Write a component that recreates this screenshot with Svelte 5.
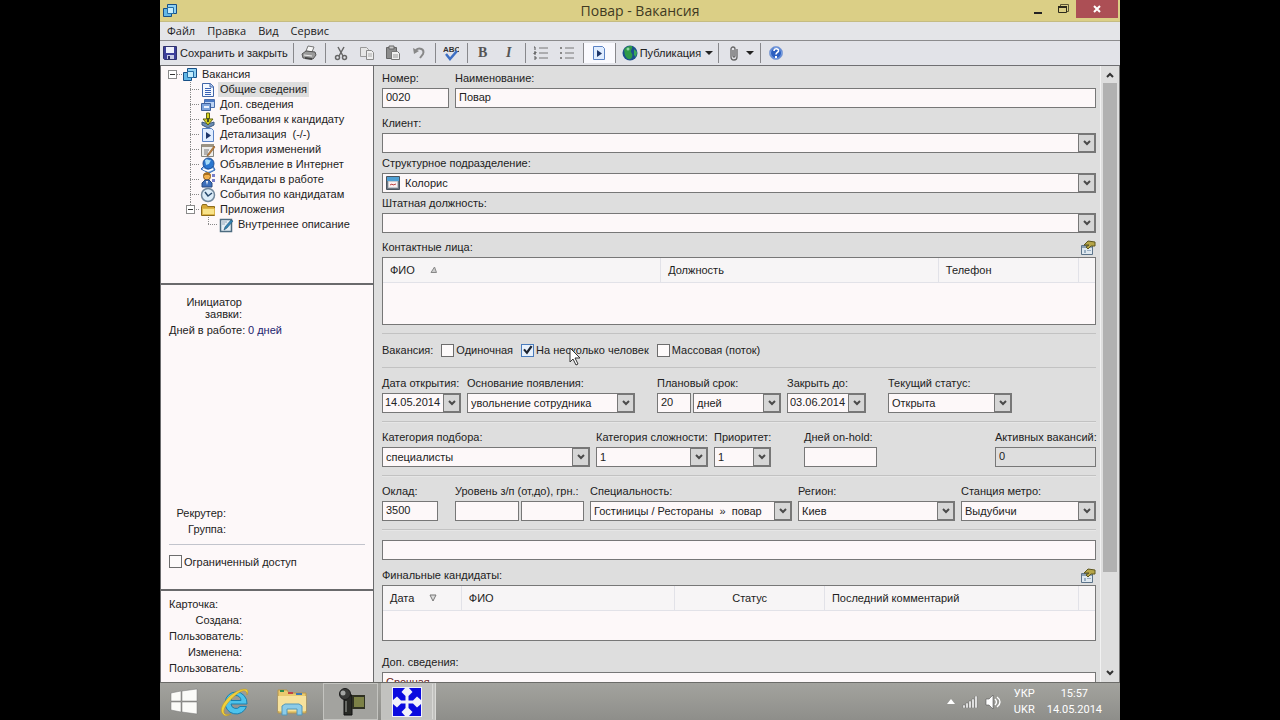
<script>
  let tree = [
    { icon: 'page', text: 'Общие сведения', active: true },
    { icon: 'cards', text: 'Доп. сведения' },
    { icon: 'needs', text: 'Требования к кандидату' },
    { icon: 'play', text: 'Детализация  (-/-)' },
    { icon: 'history', text: 'История изменений' },
    { icon: 'web', text: 'Объявление в Интернет' },
    { icon: 'person', text: 'Кандидаты в работе' },
    { icon: 'clock', text: 'События по кандидатам' }
  ];
  let cardRows = ['Создана:', 'Пользователь:', 'Изменена:', 'Пользователь:'];
</script>

{#snippet icon(name)}
  <svg class="icon" viewBox="0 0 16 16" width="16" height="16" aria-hidden="true">
    {#if name === 'app'}
      <path d="M5.500 1.500h9v9h-9z" fill="#8fd0f2" stroke="#174f86" />
      <path d="M1.500 5.500h8v8h-8z" fill="#62b7e6" stroke="#174f86" />
      <path d="M5.500 4.500h6v6h-6z" fill="#c4ecfb" stroke="#256fa8" />
    {:else if name === 'save'}
      <path d="M1.500 1.500h13v13h-12l-1-1z" fill="#3c3f9a" stroke="#30336e" />
      <path d="M4 2h8v6H4z" fill="#eef1fb" />
      <path d="M5 10h7v4H5z" fill="#c7cbe4" /><path d="M6 11h2v3H6z" fill="#2b2d66" />
    {:else if name === 'print'}
      <path d="M5 6l2-5 6 1-2 5z" fill="#f8f8f8" stroke="#777" />
      <path d="M1 9l4-3 9 1 1 3-3 4-10-1z" fill="#9a9a9a" stroke="#555" />
      <path d="M3 10l8 1" stroke="#eee" /><path d="M4 13l7 1" stroke="#444" stroke-width="2" />
    {:else if name === 'cut'}
      <path d="M5 2l5 9M11 2L6 11" fill="none" stroke="#666" stroke-width="1.500" />
      <circle cx="4.500" cy="12.500" r="2" fill="none" stroke="#666" stroke-width="1.500" />
      <circle cx="11.500" cy="12.500" r="2" fill="none" stroke="#666" stroke-width="1.500" />
    {:else if name === 'copy'}
      <path d="M1.500 2.500h6l2 2v7h-8z" fill="#e6e6e6" stroke="#999" />
      <path d="M7.500 5.500h5l2 2v7h-7z" fill="#eee" stroke="#8a8a8a" /><path d="M9 9h4M9 11h4" stroke="#aaa" />
    {:else if name === 'paste'}
      <path d="M1.500 2.500h10v11h-10z" fill="#8c8c8c" stroke="#666" />
      <path d="M4 1h5v3H4z" fill="#c9c9c9" stroke="#666" />
      <path d="M6.500 6.500h6l2 2v6h-8z" fill="#f0f0f0" stroke="#777" /><path d="M8 10h5M8 12h5" stroke="#999" />
    {:else if name === 'undo'}
      <path d="M5 5c3-3 9-1 7 4l-3 4" fill="none" stroke="#888" stroke-width="2" />
      <path d="M2 3l1 6 5-3z" fill="#888" />
    {:else if name === 'spell'}
      <text x="0" y="7" font-size="8" font-weight="700" font-family="Liberation Sans" fill="#333">ABC</text>
      <path d="M3 9l4 5 7-8" fill="none" stroke="#3d6fc4" stroke-width="2.500" />
    {:else if name === 'numbers'}
      <path d="M6 3h9M6 8h9M6 13h9" stroke="#777" /><path d="M1 2h1v3M1 7h2v1H1v1h2M1 12h2v2H1" fill="none" stroke="#555" />
    {:else if name === 'bullets'}
      <path d="M6 3h9M6 8h9M6 13h9" stroke="#777" /><path d="M1 2h2v2H1zM1 7h2v2H1zM1 12h2v2H1z" fill="#888" />
    {:else if name === 'globe'}
      <circle cx="8" cy="8" r="7.500" fill="#1b4f8e" />
      <path d="M2 5c2-4 6-4 8-4 1 3-2 4-1 6s2 2 1 5-4 3-6 0-1-4-2-7z" fill="#2f9a48" />
      <path d="M12 4l3 3-1 5-2-2z" fill="#3aa85a" /><circle cx="6" cy="4" r="1.500" fill="#8ed7a4" />
    {:else if name === 'clip'}
      <path d="M11 4v8a3 3 0 0 1-6 0V4a2 2 0 0 1 4 0v7a1 1 0 0 1-2 0V5" fill="none" stroke="#666" stroke-width="1.300" />
    {:else if name === 'help'}
      <circle cx="8" cy="8" r="6.500" fill="#2c5fc0" stroke="#8aa5d8" />
      <circle cx="8" cy="8" r="5.500" fill="none" stroke="#7fa4e6" />
      <path d="M6 6c0-3 5-3 4.500 0C10 7.500 8 7.500 8 9.500" fill="none" stroke="#fff" stroke-width="1.600" /><path d="M7 11h2v2H7z" fill="#fff" />
    {:else if name === 'page'}
      <path d="M2.500 1.500h8l3 3v10h-11z" fill="#f4f8ff" stroke="#4166a8" />
      <path d="M10 1.500V5h3.500" fill="#b9cdf0" stroke="#4166a8" /><path d="M5 6.500h6M5 8.500h6M5 10.500h6M5 12.500h6" stroke="#3a62b4" />
    {:else if name === 'cards'}
      <path d="M4.500 2.500h10v8h-10z" fill="#bed4f4" stroke="#4a6fae" /><path d="M5 3h9v2H5z" fill="#4b79c4" />
      <path d="M1.500 6.500h9v7h-9z" fill="#7ea4dc" stroke="#3e609c" /><path d="M4 9h5v2H4z" fill="#eaf2ff" />
    {:else if name === 'needs'}
      <path d="M2 10l6 2 6-2v3l-6 3-6-3z" fill="#6d8db4" stroke="#3b5a80" />
      <path d="M6.500 1h3v6h3.500l-5 6-5-6h3.500z" fill="#d8d322" stroke="#5f6413" /><path d="M7 6h2v4H7z" fill="#4a5020" />
    {:else if name === 'play'}
      <path d="M2.500 1.500h9l2 2v11h-11z" fill="#e0edff" stroke="#5a82c4" /><path d="M6 5l5 3.500L6 12z" fill="#1d3569" />
    {:else if name === 'history'}
      <path d="M1.500 2.500h12v12h-12z" fill="#ededeb" stroke="#85857f" /><path d="M2 2h12v3H2z" fill="#9b9383" />
      <path d="M4 8h5M4 10h4M4 12h4" stroke="#777" /><path d="M14 4l-6 8-1 2 2-1 6-8z" fill="#c9873e" stroke="#7d4d20" stroke-width=".6" />
    {:else if name === 'web'}
      <path d="M1 12l3-3h9l2 4-6 3z" fill="#7fb0ea" stroke="#2f64ad" />
      <circle cx="8.500" cy="6.500" r="5.500" fill="#2a76cf" stroke="#1d4d94" />
      <path d="M5 3c3-2 3 1 6 0l-2 4-3 1z" fill="#a7dcf7" /><path d="M3 12l5 2 5-2" fill="none" stroke="#fff" stroke-width="1.500" />
    {:else if name === 'person'}
      <circle cx="7" cy="4.500" r="3.500" fill="#f2b04b" stroke="#8a5a1c" /><path d="M3 4c0-5 8-5 8 0L9 3H5z" fill="#a8701f" />
      <path d="M2 15v-4l3-3h4l3 3v4z" fill="#3d6fba" stroke="#28497e" /><path d="M6 9l1 4 1-4z" fill="#fff" />
      <path d="M12 2h3v3h-3zM12 7h3v3h-3z" fill="#777ec9" />
    {:else if name === 'clock'}
      <circle cx="8" cy="8" r="6.500" fill="#dcecf8" stroke="#71879b" stroke-width="1.500" />
      <path d="M5 5l3 4 4-3" fill="none" stroke="#28496c" stroke-width="1.500" />
    {:else if name === 'folder'}
      <path d="M1.500 4.500l1-2h4l1 2h7v9h-13z" fill="#d6a735" stroke="#8b6a1b" /><path d="M2.500 6.500h12v6h-12z" fill="#f8e38a" stroke="#dcb548" />
    {:else if name === 'note'}
      <path d="M2.500 2.500h11v12h-11z" fill="#e4eef4" stroke="#4d6b80" stroke-width="1.500" />
      <path d="M4 5h5M4 7h3" stroke="#9ab" /><path d="M13 3l-6 7-1 3 3-2 6-7z" fill="#3285b5" stroke="#204f70" stroke-width=".6" />
    {:else if name === 'unit'}
      <path d="M1.500 1.500h13v13h-13z" fill="#6f7883" stroke="#4a5560" /><path d="M2 2h12v4H2z" fill="#4fa0d4" />
      <path d="M3.500 6.500h9v6h-9z" fill="#fbeeee" stroke="#c5cbd1" /><path d="M5 10l2-1 1 1 3-1" fill="none" stroke="#b44" />
    {:else if name === 'props'}
      <path d="M1.500 5.500h11v9h-11z" fill="#dfe8ef" stroke="#5b7389" /><path d="M2 6h10v2H2z" fill="#8ba0b2" />
      <path d="M4 5l4-4 7 1v4h-4l-3 3-2-2 3-2z" fill="#b6a548" stroke="#5e571f" /><path d="M4 10h2v3H4zM7 10h4v1H7z" fill="#9ab0c4" />
    {/if}
  </svg>
{/snippet}

{#snippet chevron()}
  <span class="drop" aria-hidden="true"><svg viewBox="0 0 8 6" width="8" height="6"><path d="M1 1l3 3 3-3" fill="none" stroke="#4a4a4a" stroke-width="2" /></svg></span>
{/snippet}

{#snippet text(id, label, value)}
  <div class="field">
    <label for={id}>{label}</label>
    <input {id} type="text" {value} />
  </div>
{/snippet}

{#snippet combo(id, label, value, kind = '')}
  <div class="field">
    <label for={id}>{label}</label>
    <div class="combo {kind}">
      <select {id}><option>{value}</option></select>
      {@render chevron()}
      {#if kind === 'pictured'}<span class="pic">{@render icon('unit')}</span>{/if}
    </div>
  </div>
{/snippet}

{#snippet check(label, checked = false, pointer = false)}
  <label class="check">
    <input type="checkbox" {checked} />
    <span>{label}</span>
    {#if pointer}
      <svg class="pointer" viewBox="0 0 12 19" width="12" height="19" aria-hidden="true"><path d="M1 1v14l3-3 3 6 2-1-3-6h5z" fill="#fff" stroke="#333" /></svg>
    {/if}
  </label>
{/snippet}

{#snippet tool(name, label)}
  <button class="tool" aria-label={label}>{@render icon(name)}</button>
{/snippet}

<div class="screen">
  <header class="title">
    {@render icon('app')}
    <h1>Повар - Вакансия</h1>
    <div class="controls">
      <button aria-label="Свернуть"><svg viewBox="0 0 12 12" width="12" height="12"><path d="M2 9h8v2H2z" fill="#222" /></svg></button>
      <button aria-label="Восстановить"><svg viewBox="0 0 12 12" width="12" height="12"><path d="M3.500 3V1.500h8v7H10" fill="none" stroke="#5d5635" /><path d="M1.500 3.500h8v6h-8z" fill="none" stroke="#2d2a1c" /><path d="M1 3h9v2H1z" fill="#2d2a1c" /></svg></button>
      <button class="close" aria-label="Закрыть"><svg viewBox="0 0 10 10" width="10" height="10"><path d="M2 2l6 6M8 2L2 8" stroke="#fff" stroke-width="2" /></svg></button>
    </div>
  </header>

  <nav class="menu">
    <button>Файл</button><button>Правка</button><button>Вид</button><button>Сервис</button>
  </nav>

  <div class="toolbar" role="toolbar">
    <div class="group"><button class="save">{@render icon('save')}Сохранить и закрыть</button></div>
    <div class="group">{@render tool('print', 'Печать')}</div>
    <div class="group">
      {@render tool('cut', 'Вырезать')}{@render tool('copy', 'Копировать')}{@render tool('paste', 'Вставить')}{@render tool('undo', 'Отменить')}
    </div>
    <div class="group">{@render tool('spell', 'Орфография')}</div>
    <div class="group"><button class="tool letter"><b>B</b></button><button class="tool letter"><b><i>I</i></b></button></div>
    <div class="group">{@render tool('numbers', 'Нумерация')}{@render tool('bullets', 'Маркеры')}</div>
    <div class="group lit">{@render tool('play', 'Просмотр')}</div>
    <div class="group"><button class="publish">{@render icon('globe')}Публикация<span class="caret"></span></button></div>
    <div class="group"><button class="attach" aria-label="Вложение">{@render icon('clip')}<span class="caret"></span></button></div>
    <div class="group">{@render tool('help', 'Справка')}</div>
  </div>

  <div class="work">
    <aside>
      <section class="tree">
        <div class="root"><button class="expander" aria-label="Свернуть Вакансия"></button><span class="dash"></span>{@render icon('app')}<span>Вакансия</span></div>
        <ul>
          {#each tree as item}
            <li><div class="node">{@render icon(item.icon)}<a href="#main" class:active={item.active}>{item.text}</a></div></li>
          {/each}
          <li>
            <div class="node last">{@render icon('folder')}<a href="#main">Приложения</a><button class="expander" aria-label="Свернуть Приложения"></button></div>
            <ul><li><div class="node last">{@render icon('note')}<a href="#main">Внутреннее описание</a></div></li></ul>
          </li>
        </ul>
      </section>
      <section class="info">
        <dl>
          <div class="two"><dt>Инициатор заявки:</dt><dd></dd></div>
          <div><dt>Дней в работе:</dt><dd>0 дней</dd></div>
        </dl>
        <dl class="lower">
          <div><dt>Рекрутер:</dt><dd></dd></div>
          <div><dt>Группа:</dt><dd></dd></div>
        </dl>
        <div class="access">{@render check('Ограниченный доступ')}</div>
      </section>
      <section class="card">
        <h2>Карточка:</h2>
        <dl>{#each cardRows as row}<div><dt>{row}</dt><dd></dd></div>{/each}</dl>
      </section>
    </aside>

    <main id="main">
      <form>
        <div class="row head">{@render text('number', 'Номер:', '0020')}{@render text('name', 'Наименование:', 'Повар')}</div>
        <div class="stack">
          {@render combo('client', 'Клиент:', '')}
          {@render combo('unit', 'Структурное подразделение:', 'Колорис', 'pictured')}
          {@render combo('post', 'Штатная должность:', '')}
        </div>
        <section class="list">
          <div class="caption"><h2>Контактные лица:</h2><button type="button" aria-label="Свойства контактов">{@render icon('props')}</button></div>
          <div class="frame contacts">
            <table>
              <colgroup><col class="c39" /><col class="c39" /><col /><col class="end" /></colgroup>
              <thead><tr><th>ФИО <svg class="sort" viewBox="0 0 8 8" width="8" height="8"><path d="M1 6.500L4.500 1 6.500 6.500z" fill="#ccc" stroke="#888" /></svg></th><th>Должность</th><th>Телефон</th><th></th></tr></thead>
            </table>
          </div>
        </section>
        <div class="kinds">
          <span>Вакансия:</span>
          {@render check('Одиночная')}
          {@render check('На несколько человек', true, true)}
          {@render check('Массовая (поток)')}
        </div>
        <div class="row dates">
          {@render combo('opened', 'Дата открытия:', '14.05.2014', 'date')}
          {@render combo('reason', 'Основание появления:', 'увольнение сотрудника')}
          <span></span>
          <div class="field">
            <label for="term">Плановый срок:</label>
            <div class="pair term">
              <input id="term" type="text" value="20" />
              <div class="combo"><select aria-label="Единица срока"><option>дней</option></select>{@render chevron()}</div>
            </div>
          </div>
          {@render combo('closing', 'Закрыть до:', '03.06.2014', 'date')}
          <span></span>
          {@render combo('status', 'Текущий статус:', 'Открыта')}
        </div>
        <div class="row groups">
          {@render combo('category', 'Категория подбора:', 'специалисты')}
          {@render combo('level', 'Категория сложности:', '1')}
          {@render combo('priority', 'Приоритет:', '1')}
          <span></span>
          {@render text('hold', 'Дней on-hold:', '')}
          <span></span>
          <div class="field"><label for="active">Активных вакансий:</label><input id="active" class="locked" type="text" value="0" readonly /></div>
        </div>
        <div class="row pay">
          {@render text('salary', 'Оклад:', '3500')}
          <span></span>
          <div class="field">
            <label for="from">Уровень з/п (от,до), грн.:</label>
            <div class="pair"><input id="from" type="text" /><input aria-label="Уровень до" type="text" /></div>
          </div>
          {@render combo('speciality', 'Специальность:', 'Гостиницы / Рестораны\u00a0 »\u00a0 повар')}
          {@render combo('region', 'Регион:', 'Киев')}
          {@render combo('metro', 'Станция метро:', 'Выдубичи')}
        </div>
        <div class="single"><input aria-label="Комментарий" type="text" /></div>
        <section class="list">
          <div class="caption"><h2>Финальные кандидаты:</h2><button type="button" aria-label="Свойства кандидатов">{@render icon('props')}</button></div>
          <div class="frame finals">
            <table>
              <colgroup><col class="c11" /><col class="c30" /><col class="c21" /><col /><col class="end" /></colgroup>
              <thead><tr><th>Дата <svg class="sort" viewBox="0 0 8 8" width="8" height="8"><path d="M1 1h6L4 7z" fill="#ddd" stroke="#777" /></svg></th><th>ФИО</th><th class="mid">Статус</th><th>Последний комментарий</th><th></th></tr></thead>
            </table>
          </div>
        </section>
        <div class="field extra">
          <label for="extra">Доп. сведения:</label>
          <textarea id="extra" rows="5">Срочная</textarea>
        </div>
      </form>
      <div class="scroll" aria-hidden="true">
        <svg viewBox="0 0 8 6" width="8" height="6"><path d="M1 5l3-3 3 3" fill="none" stroke="#333" stroke-width="2" /></svg>
        <div class="track"><div class="thumb"></div></div>
        <svg viewBox="0 0 8 6" width="8" height="6"><path d="M1 1l3 3 3-3" fill="none" stroke="#333" stroke-width="2" /></svg>
      </div>
    </main>
  </div>

  <footer>
    <button class="task" aria-label="Пуск">
      <svg viewBox="0 0 28 28" width="28" height="28"><path d="M1 5l10-2v10H1zM12 3l15-2v12H12zM1 14h10v10L1 22zM12 14h15v12l-15-2z" fill="#fbfbf8" stroke="#777" stroke-width=".5" /></svg>
    </button>
    <button class="task" aria-label="Internet Explorer">
      <svg viewBox="0 0 32 30" width="32" height="30">
        <path d="M16 5a11 11 0 1 0 10.500 14.500h-6.500a5 5 0 0 1-9-2.500H27A11 11 0 0 0 16 5zM11 13.500a5 5 0 0 1 10 0z" fill="#4dc3ec" stroke="#1a7fae" fill-rule="evenodd" />
        <path d="M27 8C31 0 22 1 14 6S-1 21 2 26s7 2 9 1c-4 1-8 1-7-4S12 11 17 7s10-5 10 1z" fill="#f1cf3c" stroke="#b5921e" stroke-width=".5" />
      </svg>
    </button>
    <button class="task" aria-label="Проводник">
      <svg viewBox="0 0 32 30" width="32" height="30">
        <path d="M2 3h9l2 3h17v20H2z" fill="#e9c96e" stroke="#b8964a" /><path d="M4 3h4v2H4z" fill="#2d8a48" /><path d="M12 5h5v2h-5z" fill="#c04444" /><path d="M20 6h6v2h-6z" fill="#3c78b8" />
        <path d="M2 9h28v15H2z" fill="#f6e19c" /><path d="M6 28V19l3-2h14l3 2v9h-5v-6H11v6z" fill="#8ccbe8" stroke="#5297ba" />
      </svg>
    </button>
    <button class="task open" aria-label="Камера">
      <svg viewBox="0 0 30 30" width="30" height="30">
        <path d="M8 8h8v20H8z" fill="#292a26" stroke="#111" /><path d="M16 8h13v14H16z" fill="#2f3122" /><path d="M18 10h10v10H18z" fill="#7c8146" />
        <circle cx="9" cy="7" r="5.500" fill="#3a3b39" stroke="#1b1b1b" /><circle cx="7" cy="6" r="2.500" fill="#a4a6a4" /><path d="M10 14v11" stroke="#686a65" stroke-width="2" />
      </svg>
    </button>
    <button class="task open current" aria-label="Вакансия">
      <svg viewBox="0 0 30 30" width="30" height="30">
        <path d="M0 0h30v30H0z" fill="#f1f1fb" />
        <path d="M1 1h12L9.500 5l4 4v4.500H9l-4-4L1 13z" fill="#0a0adf" />
        <path d="M29 1H17l3.500 4-4 4v4.500H21l4-4 4 3.500z" fill="#0a0adf" />
        <path d="M1 29h12l-3.500-4 4-4v-4.500H9l-4 4L1 17z" fill="#0a0adf" />
        <path d="M29 29H17l3.500-4-4-4v-4.500H21l4 4 4-3.500z" fill="#0a0adf" />
      </svg>
    </button>
    <div class="tray">
      <svg viewBox="0 0 8 5" width="8" height="5"><path d="M0 5l4-5 4 5z" fill="#fff" /></svg>
      <svg viewBox="0 0 16 12" width="16" height="12"><path d="M1 9h2v3H1zM4 7h2v5H4zM7 5h2v7H7zM10 3h2v9h-2zM13 0h2v12h-2z" fill="#fff" stroke="#555" stroke-width=".4" /></svg>
      <svg viewBox="0 0 16 14" width="16" height="14"><path d="M1 4h3l4-4v14l-4-4H1z" fill="#fff" stroke="#555" stroke-width=".6" /><path d="M10 4c2 2 2 4 0 6M12 2c4 3 4 7 0 10" fill="none" stroke="#fff" stroke-width="1.400" /></svg>
      <p class="lang">УКР<br />UKR</p>
      <p class="time">15:57<br />14.05.2014</p>
    </div>
  </footer>
</div>

<style>
  :global(body) { margin: 0; background: #000; }
  * { box-sizing: border-box; }
  .screen {
    display: flex; flex-direction: column; height: 100vh; margin: 0 12.5%; overflow: hidden;
    background: #dedede; color: #222; font: 11px/16px "Liberation Sans", Arial, sans-serif;
  }
  button { padding: 0; border: 0; background: none; color: inherit; font: inherit; }
  h1, h2, p, dl, dd, ul { margin: 0; padding: 0; font: inherit; list-style: none; }
  svg { display: block; flex: none; }

  .title { display: grid; grid-template-columns: 1fr auto 1fr; align-items: center; height: 22px; flex: none; padding: 0 2px; background: #dbcf86; border-bottom: 1px solid #c5bc82; }
  .title h1 { font: 14px/20px "Open Sans", sans-serif; color: #3f3a22; }
  .controls { display: flex; justify-content: flex-end; align-self: start; }
  .controls button { display: flex; align-items: center; justify-content: center; width: 25px; height: 18px; }
  .controls .close { width: 42px; margin-left: 1px; background: #ac4f55; }

  .menu { display: flex; gap: 12px; height: 19px; flex: none; padding-left: 7px; background: #e4e5e8; border-bottom: 1px solid #8b8b8d; font: 11px/18px "Open Sans", sans-serif; }
  .toolbar { display: flex; height: 25px; flex: none; padding: 2px 0; background: #e2e3e8; border-bottom: 1px solid #6f6f72; }
  .group { display: flex; align-items: center; padding: 0 3px 0 2px; border-right: 1px solid #88888c; }
  .group:last-child { border: 0; }
  .group.lit { background: #fafafe; }
  .tool { display: flex; justify-content: center; width: 26px; }
  .letter { color: #555; font: 14px/16px "Liberation Serif", serif; }
  .save, .publish, .attach { display: flex; align-items: center; gap: 2px; padding-right: 2px; }
  .publish { padding: 0 2px 0 4px; }
  .attach { padding: 0 3px 0 5px; }
  .caret { border: 4px solid transparent; border-top-color: #222; border-bottom: 0; margin-left: 2px; }

  .work { display: grid; grid-template-columns: 214fr 746fr; flex: 1; min-height: 0; }
  aside { display: grid; grid-template-rows: 219px 1fr 91px; min-height: 0; border: solid #6a6a6c; border-width: 0 1px; background: #fdf8f9; }
  aside section { border-bottom: 2px solid #6a6a6c; }
  aside section.card { border: 0; }
  .tree { padding: 1px 0 0 7px; line-height: 15px; }
  .root, .node { display: flex; align-items: center; height: 15px; position: relative; }
  .root > span:last-child { padding-left: 4px; }
  .dash { width: 5px; border-top: 1px dotted #888; }
  .expander { width: 9px; height: 9px; border: 1px solid #8a8a8a; background: linear-gradient(#333, #333) center / 5px 1px no-repeat #fff; }
  .tree ul { margin-left: 22px; }
  .tree ul ul { margin-left: 18px; }
  .node::before { content: ""; width: 10px; height: 15px; background: repeating-linear-gradient(90deg, #888 0 1px, transparent 1px 2px) 0 7px / 10px 1px no-repeat, repeating-linear-gradient(#888 0 1px, transparent 1px 2px) 0 0 / 1px 15px no-repeat; }
  .node.last::before { background-size: 10px 1px, 1px 8px; }
  .node .expander { position: absolute; left: -4px; top: 3px; }
  .node a { padding: 0 2px; margin-left: 2px; color: #222; text-decoration: none; white-space: pre; }
  .node a.active { background: #dedede; }

  .info { display: flex; flex-direction: column; padding: 11px 8px 0; }
  dl > div { display: grid; grid-template-columns: 73px 1fr; column-gap: 6px; }
  dt { text-align: right; white-space: nowrap; }
  dd { color: #23236e; }
  .two { line-height: 12px; padding-bottom: 2px; }
  .two dt { white-space: normal; }
  .lower { margin-top: auto; padding-bottom: 7px; border-bottom: 1px solid #c2c4cc; }
  .lower > div { grid-template-columns: 57px 1fr; }
  .access { padding: 9px 0 17px; }
  .card { padding: 5px 8px 0; }

  .check { position: relative; display: inline-flex; align-items: center; gap: 2px; }
  .check input { appearance: none; width: 13px; height: 13px; margin: 0; border: 1px solid #6d6d6d; background: #fdfafa; }
  .check input:checked { border-color: #4a7cbc; background: #e8f1fc; }
  .check input:checked::before { content: ""; display: block; width: 11px; height: 11px; background: #1d2430; clip-path: polygon(10% 50%, 25% 38%, 42% 58%, 78% 8%, 95% 20%, 45% 92%); }
  .pointer { position: absolute; left: 48px; top: 5px; }

  main { display: flex; min-width: 0; min-height: 0; overflow: hidden; }
  form { flex: 1; min-width: 0; padding: 6px 4px 0 8px; overflow: hidden; }
  .scroll { display: flex; flex-direction: column; align-items: center; width: 20px; padding: 6px 0; border-left: 1px solid #f2f2f2; border-right: 1px solid #777; }
  .track { flex: 1; align-self: stretch; margin: 5px 2px; }
  .thumb { height: 84%; background: #b1b1b1; }

  .row { display: grid; column-gap: 6px; padding: 9px 0 8px; border-bottom: 1px solid #c2c2c2; box-shadow: 0 1px #e6e6e6; }
  .head { grid-template-columns: 67fr 641fr; padding: 0 0 9px; border: 0; box-shadow: none; }
  .dates { grid-template-columns: 79fr 168fr 10fr 124fr 79fr 10fr 124fr 78fr; }
  .groups { grid-template-columns: 208fr 112fr 57fr 21fr 73fr 106fr 101fr; }
  .pay { grid-template-columns: 56fr 5fr 129fr 202fr 157fr 135fr; }
  .field { display: flex; flex-direction: column; min-width: 0; }
  .field > label, .caption h2 { height: 16px; line-height: 12px; white-space: nowrap; }
  .stack { display: flex; flex-direction: column; gap: 4px; }
  form input[type="text"], select, textarea { width: 100%; min-width: 0; height: 20px; margin: 0; padding: 0 3px 2px; border: 1px solid #777; border-radius: 0; background: #fdf8f9; color: #222; font: inherit; }
  form input.locked { background: #dedede; }
  select { appearance: none; padding: 0 18px 0 3px; }
  .combo { display: grid; min-width: 0; }
  .combo > * { grid-area: 1 / 1; }
  .date select { padding: 0 16px 2px 2px; }
  .pictured select { padding-left: 22px; }
  .pic { place-self: center start; padding-left: 3px; pointer-events: none; }
  .drop { display: grid; place-content: center; justify-self: end; align-self: center; width: 17px; height: 18px; margin-right: 1px; border: 1px solid #777; background: #d6d6d6; pointer-events: none; }
  .pair { display: grid; grid-template-columns: 1fr 1fr; gap: 2px; }
  .pair.term { grid-template-columns: 34fr 88fr; }

  .list { padding-top: 8px; }
  .caption { display: flex; justify-content: space-between; height: 16px; }
  .caption button { height: 16px; }
  .caption svg { margin-top: -2px; }
  .frame { border: 1px solid #777; background: #fdf8f9; }
  .contacts { height: 68px; }
  .finals { height: 56px; }
  table { width: 100%; table-layout: fixed; border-collapse: collapse; }
  th { height: 24px; padding: 0 7px; border: solid #e2e2e8; border-width: 0 1px 1px 0; background: #f7f5f6; font-weight: 400; text-align: left; }
  th:last-child { border-right: 0; }
  th.mid { text-align: center; }
  .sort { display: inline-block; margin-left: 12px; }
  .c39 { width: 39%; }
  .c11 { width: 11%; }
  .c30 { width: 30%; }
  .c21 { width: 21%; }
  .end { width: 17px; }
  .kinds { display: flex; align-items: center; gap: 8px; height: 35px; margin-top: 8px; padding-bottom: 1px; border: solid #c2c2c2; border-width: 1px 0; white-space: nowrap; }
  .single { padding: 10px 0 1px; }
  .single input { display: block; }
  .extra { padding-top: 15px; }
  form .extra textarea { height: auto; padding: 1px 3px; color: #6b1f22; resize: none; overflow-y: scroll; }

  footer { display: flex; align-items: stretch; height: 38px; flex: none; border-top: 1px solid #6b6b68; background: linear-gradient(#a3a39e, #8e8e8a); }
  .task { display: flex; align-items: center; justify-content: center; width: 56px; }
  .task:first-child { width: 48px; }
  .task.open { width: 55px; margin-left: 3px; border: 1px solid #c4c4c0; background: #a3a39f; }
  .task.current { background: #c2c2bf; border-right: 4px double #d9d9d6; }
  .tray { display: flex; align-items: center; gap: 7px; margin-left: auto; padding-right: 18px; color: #fff; font: 11px/16px Roboto, sans-serif; text-align: center; }
  .lang { margin-left: 6px; }
  .time { margin-left: 5px; }
</style>
